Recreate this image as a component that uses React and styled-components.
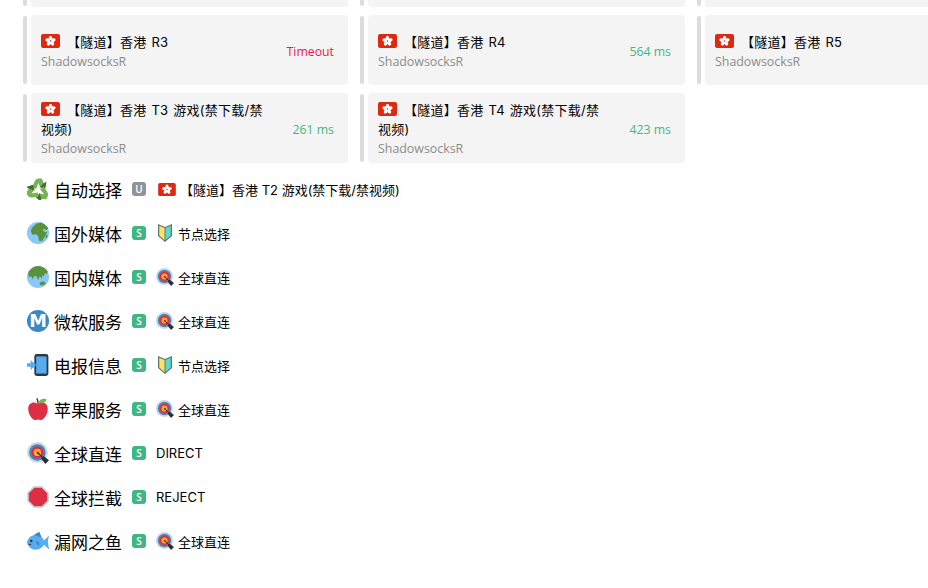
import React from 'react';
import styled, { createGlobalStyle } from 'styled-components';

const Svg = ({ size = 18, children, className }) => (
	<svg className={className} width={size} height={size} viewBox="0 0 36 36" style={{ flex: 'none' }}>
		{children}
	</svg>
);

const Petal = ({ r }) => (
	<g transform={`rotate(${r} 18 20)`}>
		<path d="M8 15 L13 5 Q15 1 19 1 H24 L28 9 L21 14 L18.5 8 L15 18 Z" fill="#77B255" />
		<path d="M20 15 L28 8 L32 6 L30 17 Z" fill="#3E721D" />
	</g>
);

const Recycle = ({ size }) => (
	<Svg size={size}>
		<Petal r={0} />
		<Petal r={120} />
		<Petal r={240} />
	</Svg>
);

const GlobeAfrica = ({ size }) => (
	<Svg size={size}>
		<circle cx="18" cy="18" r="18" fill="#88C9F9" />
		<path d="M8 10 L15 3 L23 1 L29 4 L35 10 L32 13 L26 11 L27 15 L33 17 L29 24 L25 31 L20 31 L18 23 L15 20 L9 21 L6 15 Z" fill="#5C913B" />
		<path d="M32 21 L34 22 L32 27 L30 25 Z" fill="#5C913B" />
	</Svg>
);

const GlobeAsia = ({ size }) => (
	<Svg size={size}>
		<circle cx="18" cy="18" r="18" fill="#88C9F9" />
		<path d="M2 10 Q9 1 18 0 Q29 1 34 9 L32 13 L29 12 L28 17 L25 15 L24 21 L21 17 L18 23 L15 16 L11 17 L10 22 L7 17 L3 18 Z" fill="#5C913B" />
		<path d="M21 27 L27 25 L31 29 L26 32 L21 31 Z" fill="#5C913B" />
	</Svg>
);

const CircleM = ({ size }) => (
	<Svg size={size}>
		<circle cx="18" cy="18" r="18" fill="#3B88C3" />
		<text x="18" y="28" textAnchor="middle" fontSize="29" fontWeight="700" fontFamily="'DejaVu Sans', sans-serif" fill="#fff">M</text>
	</Svg>
);

const Phone = ({ size }) => (
	<Svg size={size}>
		<rect x="12" y="0" width="23" height="36" rx="4" fill="#31373D" />
		<rect x="15" y="4" width="17" height="28" fill="#55ACEE" />
		<path d="M0 15 H6 V10 L15 18 L6 26 V21 H0 Z" fill="#55ACEE" />
	</Svg>
);

const Apple = ({ size }) => (
	<Svg size={size}>
		<path d="M18 10 C24 5 34 7 34 18 C34 27 27 36 23 36 C20 36 19 35 18 35 C17 35 16 36 13 36 C9 36 2 27 2 18 C2 7 12 5 18 10 Z" fill="#DD2E44" />
		<path d="M19 8 C20 2 26 0 32 2 C31 7 25 10 19 8 Z" fill="#77B255" />
		<path d="M17 10 C17 6 16 3 15 1 L17 0 C19 3 19 7 19 10 Z" fill="#662113" />
	</Svg>
);

const Target = ({ size }) => (
	<Svg size={size}>
		<circle cx="17" cy="17" r="17" fill="#CCD6DD" />
		<circle cx="17" cy="17" r="13.5" fill="#4289C1" />
		<circle cx="17" cy="17" r="10" fill="#DD2E44" />
		<circle cx="17" cy="17" r="6" fill="#FFAC33" />
		<path d="M17 17 L30 30" stroke="#292F33" strokeWidth="2" />
		<path d="M23 27 L27 23 L36 30 L30 36 Z" fill="#292F33" />
		<path d="M15 15 L21 18 L18 21 Z" fill="#662113" />
	</Svg>
);

const Stop = ({ size }) => (
	<Svg size={size}>
		<path d="M11 0 H25 L36 11 V25 L25 36 H11 L0 25 V11 Z" fill="#CCD6DD" />
		<path d="M12 3 H24 L33 12 V24 L24 33 H12 L3 24 V12 Z" fill="#DD2E44" />
	</Svg>
);

const Fish = ({ size }) => (
	<Svg size={size}>
		<path d="M0 20 C2 10 12 6 20 9 C24 11 26 14 28 17 L36 9 L34 19 L36 32 L28 24 C24 31 14 34 8 31 C4 29 1 25 0 20 Z" fill="#55ACEE" />
		<path d="M11 8 L20 3 L24 12 Z" fill="#3B88C3" />
		<path d="M15 18 Q21 19 20 26 Q15 24 15 18 Z" fill="#3B88C3" />
		<circle cx="7" cy="18" r="2" fill="#292F33" />
		<path d="M2 23 L7 24" stroke="#292F33" strokeWidth="1.5" />
	</Svg>
);

const Beginner = ({ size }) => (
	<Svg size={size}>
		<path d="M4 0 L18 6 L32 0 V24 L18 36 L4 24 Z" fill="#5C7A6B" />
		<path d="M6.5 3.5 L17 8 V32.5 L6.5 23 Z" fill="#FFE066" />
		<path d="M29.5 3.5 L19 8 V32.5 L29.5 23 Z" fill="#5DD8D0" />
	</Svg>
);

const Flag = ({ className }) => (
	<FlagSvg className={className} width="19" height="14" viewBox="0 0 19 14">
		<rect width="19" height="14" rx="2" fill="#DE2910" />
		<g fill="#fff">
			{[0, 72, 144, 216, 288].map(r => (
				<ellipse key={r} cx="9.5" cy="4.3" rx="1.8" ry="2.6" transform={`rotate(${r} 9.5 7)`} />
			))}
		</g>
		<circle cx="9.5" cy="7" r="0.7" fill="#DE2910" />
	</FlagSvg>
);

const cards = [
	{ id: 'a' }, { id: 'b' }, { id: 'c' },
	{ id: 'R3', name: 'R3', delay: 'Timeout', bad: true },
	{ id: 'R4', name: 'R4', delay: '564 ms' },
	{ id: 'R5', name: 'R5', delay: '' },
	{ id: 'T3', name: 'T3 游戏(禁下载/禁视频)', delay: '261 ms' },
	{ id: 'T4', name: 'T4 游戏(禁下载/禁视频)', delay: '423 ms' },
];

const groups = [
	{ icon: Recycle, title: '自动选择', type: 'U', flag: true, now: '【隧道】香港 T2 游戏(禁下载/禁视频)' },
	{ icon: GlobeAfrica, title: '国外媒体', type: 'S', nowIcon: Beginner, now: '节点选择' },
	{ icon: GlobeAsia, title: '国内媒体', type: 'S', nowIcon: Target, now: '全球直连' },
	{ icon: CircleM, title: '微软服务', type: 'S', nowIcon: Target, now: '全球直连' },
	{ icon: Phone, title: '电报信息', type: 'S', nowIcon: Beginner, now: '节点选择' },
	{ icon: Apple, title: '苹果服务', type: 'S', nowIcon: Target, now: '全球直连' },
	{ icon: Target, title: '全球直连', type: 'S', now: 'DIRECT' },
	{ icon: Stop, title: '全球拦截', type: 'S', now: 'REJECT' },
	{ icon: Fish, title: '漏网之鱼', type: 'S', nowIcon: Target, now: '全球直连' },
];

function App() {
	return (
		<Page>
			<GlobalStyle />
			<CardGrid>
				{cards.map(card => (
					<CardWrap key={card.id}>
						<Bar />
						<Card>
							{card.name && (
								<>
									<CardText>
										<CardName>
											<Flag />
											【隧道】香港 {card.name}
										</CardName>
										<CardType>ShadowsocksR</CardType>
									</CardText>
									<Delay $bad={card.bad}>{card.delay}</Delay>
								</>
							)}
						</Card>
					</CardWrap>
				))}
			</CardGrid>
			<GroupList>
				{groups.map(group => {
					const Icon = group.icon;
					const NowIcon = group.nowIcon;
					return (
						<GroupRow key={group.title}>
							<IconSlot><Icon size={22} /></IconSlot>
							<GroupTitle>{group.title}</GroupTitle>
							<Badge $type={group.type}>{group.type}</Badge>
							<Now>
								{group.flag && <NowFlag />}
								{NowIcon && <NowIcon size={18} />}
								<NowText>{group.now}</NowText>
							</Now>
						</GroupRow>
					);
				})}
			</GroupList>
		</Page>
	);
}

const GlobalStyle = createGlobalStyle`
	html, body {
		margin: 0;
		height: 588px;
		overflow: hidden;
		background: #fff;
	}
	body {
		font-family: "Open Sans", "Noto Sans CJK SC", sans-serif;
		color: #000;
	}
`;

const Page = styled.div`
	width: 928px;
	height: 588px;
	overflow: hidden;
`;

const CardGrid = styled.div`
	display: grid;
	grid-template-columns: repeat(3, 325px);
	column-gap: 12px;
	row-gap: 8px;
	margin: -63px 0 0 23px;
`;

const CardWrap = styled.div`
	display: flex;
	gap: 4px;
`;

const Bar = styled.div`
	width: 4px;
	margin: 1px 0;
	border-radius: 2px;
	background: #dcdcdc;
`;

const Card = styled.div`
	box-sizing: border-box;
	width: 317px;
	min-height: 70px;
	padding: 8px 14px 5px 10px;
	display: flex;
	align-items: center;
	justify-content: space-between;
	border-radius: 4px;
	background: #f4f4f4;
`;

const CardText = styled.div`
	width: 230px;
`;

const CardName = styled.div`
	font-family: Inter, "Noto Sans CJK SC", sans-serif;
	font-size: 13px;
	line-height: 19px;
	letter-spacing: 0.25px;
	word-spacing: 1px;
`;

const FlagSvg = styled.svg`
	margin-right: 7px;
	vertical-align: -1px;
`;

const CardType = styled.div`
	font-size: 12.4px;
	line-height: 19px;
	color: #8c8c8c;
`;

const Delay = styled.div`
	font-size: 12.3px;
	color: ${({ $bad }) => ($bad ? '#f5144a' : '#42b983')};
`;

const GroupList = styled.div`
	margin: 4px 0 0 27px;
`;

const GroupRow = styled.div`
	height: 44px;
	display: flex;
	align-items: center;
`;

const IconSlot = styled.div`
	width: 22px;
	height: 22px;
	margin-right: 5px;
`;

const GroupTitle = styled.div`
	font-size: 17px;
	width: 68px;
	white-space: nowrap;
`;

const Badge = styled.div`
	width: 14px;
	height: 14px;
	margin: 0 10px;
	border-radius: 3px;
	font-size: 10px;
	font-weight: 600;
	line-height: 14px;
	text-align: center;
	color: #fff;
	background: ${({ $type }) => ($type === 'U' ? '#909399' : '#3eb783')};
`;

const Now = styled.div`
	display: flex;
	align-items: center;
	gap: 4px;
`;

const NowFlag = styled(Flag)`
	width: 18px;
	height: 13px;
	margin: 0 0 0 2px;
`;

const NowText = styled.span`
	font-family: Inter, "Noto Sans CJK SC", sans-serif;
	font-size: 13px;
	white-space: nowrap;
`;

export default App;
